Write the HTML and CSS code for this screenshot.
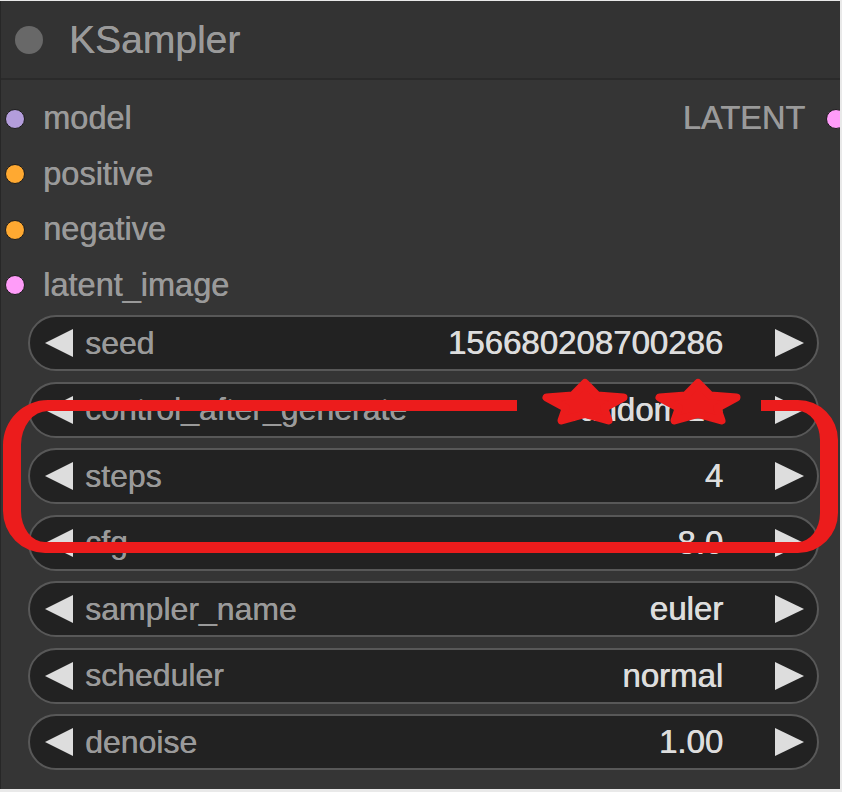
FILE: index.html
```html
<!DOCTYPE html>
<html>

<head>
    <meta charset="UTF-8">
    <title>KSampler</title>
    <link rel="stylesheet" href="styles.css">
</head>

<body>
    <div class="node">
        <div class="title">
            <span class="title-dot"></span>
            <span class="title-text">KSampler</span>
        </div>

        <div class="slots">
            <div class="inputs">
                <div class="slot"><span class="dot dot-model"></span>model</div>
                <div class="slot"><span class="dot dot-cond"></span>positive</div>
                <div class="slot"><span class="dot dot-cond"></span>negative</div>
                <div class="slot"><span class="dot dot-latent"></span>latent_image</div>
            </div>
            <div class="outputs">
                <div class="slot">LATENT<span class="dot dot-latent dot-out"></span></div>
            </div>
        </div>

        <div class="widgets">
            <div class="widget"><span class="arrow-left"></span><span class="label">seed</span><span class="value">156680208700286</span><span class="arrow-right"></span></div>
            <div class="widget"><span class="arrow-left"></span><span class="label">control_after_generate</span><span class="value">randomize</span><span class="arrow-right"></span></div>
            <div class="widget"><span class="arrow-left"></span><span class="label">steps</span><span class="value">4</span><span class="arrow-right"></span></div>
            <div class="widget"><span class="arrow-left"></span><span class="label">cfg</span><span class="value">8.0</span><span class="arrow-right"></span></div>
            <div class="widget"><span class="arrow-left"></span><span class="label">sampler_name</span><span class="value">euler</span><span class="arrow-right"></span></div>
            <div class="widget"><span class="arrow-left"></span><span class="label">scheduler</span><span class="value">normal</span><span class="arrow-right"></span></div>
            <div class="widget"><span class="arrow-left"></span><span class="label">denoise</span><span class="value">1.00</span><span class="arrow-right"></span></div>
        </div>

        <!-- red annotation drawn over the node -->
        <div class="mark"></div>
        <svg class="stars" width="842" height="792" viewBox="0 0 842 792">
            <polygon points="585,383 597.3,395.6 623.5,397.5 604.2,408 608.5,420.5 585,414 561.5,420.5 565.8,408 546.5,397.5 572.7,395.6" />
            <polygon points="698,383 710.3,395.6 736.5,397.5 717.2,408 721.5,420.5 698,414 674.5,420.5 678.8,408 659.5,397.5 685.7,395.6" />
        </svg>
    </div>
</body>

</html>
```

FILE: styles.css
```css
* { box-sizing: border-box; }

body { margin: 0; background-color: #e9e9e9; }

.node { position: relative; width: 840px; height: 788px; margin-top: 1px; overflow: hidden; background-color: #353535; border-left: 1px solid #272727; font-family: "Liberation Sans", Arial, sans-serif; }

.title { display: flex; align-items: center; gap: 26px; height: 79px; padding-left: 14px; background-color: #333333; border-bottom: 2px solid #2a2a2a; }
.title-dot { width: 28px; height: 28px; border-radius: 50%; background-color: #686868; }
.title-text { font-size: 39px; color: #9a9a9a; text-shadow: 0.3px 0 0 #9a9a9a; }

.slots { display: flex; justify-content: space-between; padding-top: 11px; }
.slot { display: flex; align-items: center; gap: 18px; height: 55.5px; font-size: 32.5px; color: #9a9a9a; text-shadow: 0.5px 0 0 #9a9a9a; }
.outputs .slot { gap: 21px; }

.dot { width: 20px; height: 20px; border-radius: 50%; border: 1.5px solid #1c1c1c; text-shadow: none; }
.inputs .dot { margin-left: 4px; }
.dot-model { background-color: #b39ddb; }
.dot-cond { background-color: #ffa931; }
.dot-latent { background-color: #ff9cf9; }
.dot-out { margin-right: -6px; }

.widgets { display: flex; flex-direction: column; gap: 10.5px; padding: 2px 21px 0 27px; }
.widget { display: flex; align-items: center; height: 56px; padding: 0 13px 0 15px; background-color: #222222; border: 2px solid #585858; border-radius: 28px; font-size: 32px; }
.label { margin-left: 12px; color: #9a9a9a; text-shadow: 0.4px 0 0 #9a9a9a; }
.value { margin-left: auto; margin-right: 52px; font-size: 33px; color: #dddddd; text-shadow: 0.7px 0 0 #dddddd; }

.arrow-left { width: 0; height: 0; border-top: 14.5px solid transparent; border-bottom: 14.5px solid transparent; border-right: 28px solid #dddddd; }
.arrow-right { width: 0; height: 0; border-top: 14.5px solid transparent; border-bottom: 14.5px solid transparent; border-left: 29px solid #dddddd; }

.mark { position: absolute; left: 2px; top: 399px; width: 835px; height: 153px; border-style: solid; border-color: #ec1c1c; border-width: 11px 18px; border-radius: 45px 40px 40px 42px; clip-path: polygon(0 0, 514px 0, 514px 16px, 758px 16px, 758px 0, 100% 0, 100% 100%, 0 100%); }

.stars { position: absolute; left: -1px; top: -1px; }
.stars polygon { fill: #ec1c1c; stroke: #ec1c1c; stroke-width: 8; stroke-linejoin: round; }
```
